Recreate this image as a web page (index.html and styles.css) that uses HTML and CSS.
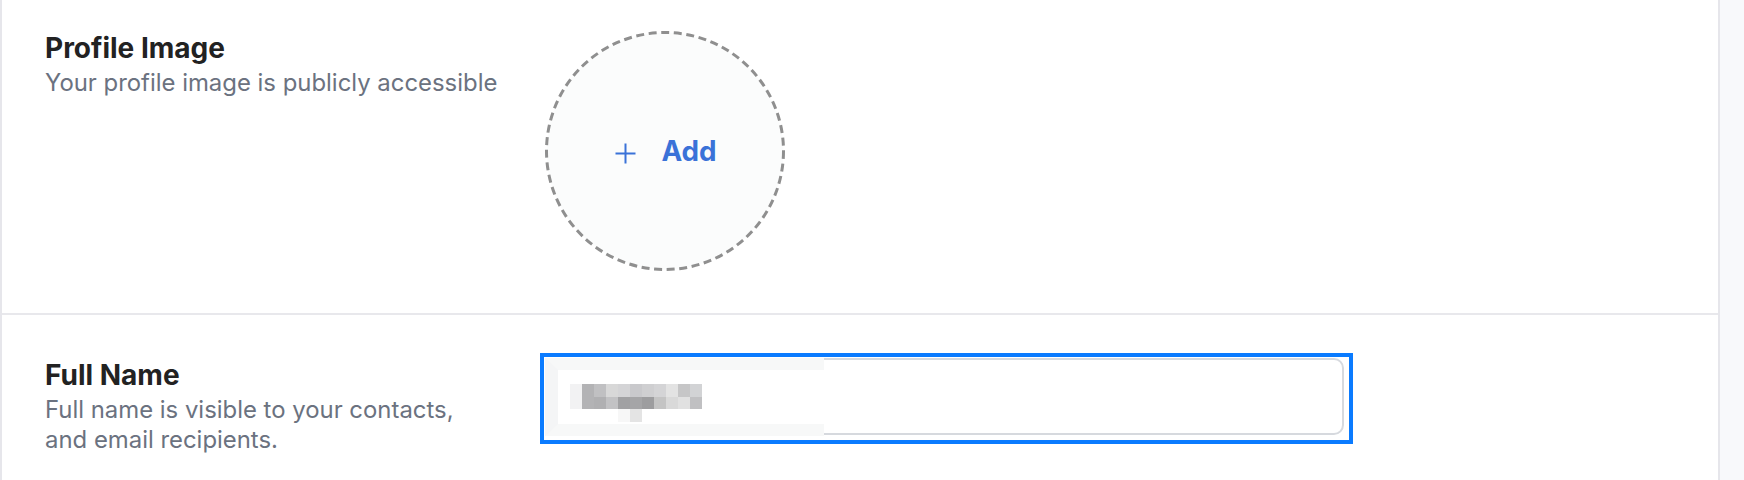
FILE: index.html
```html
<!DOCTYPE html>
<html lang="en">
<head>
<meta charset="utf-8">
<title>Profile settings</title>
<link rel="stylesheet" href="styles.css">
</head>
<body>
<div class="page">
  <main class="panel">
    <section class="row row-image">
      <div class="label">
        <h2 class="label-title">Profile Image</h2>
        <p class="label-text">Your profile image is publicly accessible</p>
      </div>
      <div class="field">
        <button class="avatar-add" type="button">
          <svg class="avatar-ring" viewBox="0 0 240 240" width="240" height="240" aria-hidden="true">
            <circle cx="120" cy="120" r="118.5" fill="#fbfcfc" stroke="#8f8f8f" stroke-width="3" stroke-dasharray="8 4.6"/>
          </svg>
          <span class="avatar-content">
            <svg class="plus" viewBox="0 0 21 21" width="21" height="21" aria-hidden="true">
              <path d="M10.5 0.5V20.5M0.5 10.5H20.5" stroke="currentColor" stroke-width="2" fill="none"/>
            </svg>
            <span class="add-text">Add</span>
          </span>
        </button>
      </div>
    </section>
    <section class="row row-name">
      <div class="label label-name">
        <h2 class="label-title">Full Name</h2>
        <p class="label-text">Full name is visible to your contacts, and email recipients.</p>
      </div>
      <div class="field">
        <div class="focus-box">
          <div class="input-wrap">
            <input class="text-input" type="text" aria-label="Full Name">
            <div class="blurred" aria-hidden="true">
              <div class="blur-grid">
                <i style="background:#f2f2f3"></i><i style="background:#b3b3b5"></i><i style="background:#c0c0c2"></i><i style="background:#d8d8d8"></i><i style="background:#d4d4d6"></i><i style="background:#c9c9cc"></i><i style="background:#cfcfd1"></i><i style="background:#d4d4d6"></i><i style="background:#e3e3e3"></i><i style="background:#c6c6c7"></i><i style="background:#d2d3d5"></i>
                <i style="background:#f2f2f3"></i><i style="background:#b3b3b5"></i><i style="background:#b0b0b2"></i><i style="background:#c2c2c4"></i><i style="background:#a1a1a3"></i><i style="background:#a5a5a7"></i><i style="background:#9d9d9f"></i><i style="background:#c4c4c4"></i><i style="background:#d9d9d9"></i><i style="background:#e1e1e1"></i><i style="background:#c0c0c2"></i>
                <i></i><i></i><i></i><i></i><i style="background:#f7f7f7"></i><i style="background:#e4e4e4"></i><i></i><i></i><i></i><i></i><i></i>
              </div>
            </div>
          </div>
        </div>
      </div>
    </section>
  </main>
  <aside class="rail"></aside>
</div>
</body>
</html>
```
FILE: styles.css
```css
* { box-sizing: border-box; }

html, body {
  margin: 0;
  padding: 0;
  height: 100%;
  background: #ffffff;
  font-family: Inter, "Noto Sans", "Liberation Sans", sans-serif;
}

.page {
  display: flex;
  height: 100vh;
  overflow: hidden;
}

.panel {
  flex: 1;
  border-left: 2px solid #e6e6eb;
  border-right: 2px solid #e6e6eb;
  background: #ffffff;
}

.rail {
  width: 24px;
  background: #f8f9fb;
}

.row {
  display: grid;
  grid-template-columns: 460px 1fr;
  column-gap: 40px;
  align-items: start;
  padding-left: 43px;
}

.row-image {
  padding-top: 31px;
  padding-bottom: 42px;
  border-bottom: 2px solid #e8e8ec;
}

.row-name {
  padding-top: 38px;
}

.label-title {
  margin: 0;
  font-size: 28px;
  line-height: 34px;
  font-weight: 700;
  color: #222222;
}

.label-text {
  margin: 3px 0 0;
  font-size: 23.9px;
  line-height: 30px;
  font-weight: 400;
  color: #6b7280;
}

.label-name {
  margin-top: 5px;
}

.label-name .label-text {
  max-width: 440px;
}

.avatar-add {
  position: relative;
  display: flex;
  align-items: center;
  justify-content: center;
  width: 240px;
  height: 240px;
  padding: 0;
  border: 0;
  border-radius: 50%;
  background: transparent;
  cursor: pointer;
  font-family: inherit;
}

.avatar-ring {
  position: absolute;
  inset: 0;
}

.avatar-content {
  position: relative;
  display: flex;
  align-items: center;
  gap: 25px;
  color: #3a72d8;
  margin-left: 2px;
}

.plus {
  display: block;
  margin-top: 4px;
}

.add-text {
  font-size: 27.8px;
  line-height: 32px;
  font-weight: 700;
  color: #3a72d8;
}

.focus-box {
  width: 813px;
  margin-left: -5px;
  border: 4px solid #0a7bff;
  padding: 1px 5px 5px 1px;
}

.input-wrap {
  position: relative;
  width: 799px;
  height: 77px;
}

.text-input {
  display: block;
  width: 100%;
  height: 100%;
  border: 2px solid #d6d9de;
  border-radius: 10px;
  background: #ffffff;
  outline: none;
  font: inherit;
  font-size: 20px;
  padding: 0 18px;
}

.blurred {
  position: absolute;
  left: 0;
  top: 0;
  width: 279px;
  height: 78px;
  background: #ffffff;
  border-top: 12px solid #f7f8f8;
  border-bottom: 12px solid #f7f8f8;
  border-left: 13px solid #f4f5f6;
  padding: 14px 0 0 12px;
}

.blur-grid {
  display: grid;
  grid-template-columns: repeat(11, 12px);
  grid-auto-rows: 12.5px;
}

.blur-grid i {
  display: block;
}
```
